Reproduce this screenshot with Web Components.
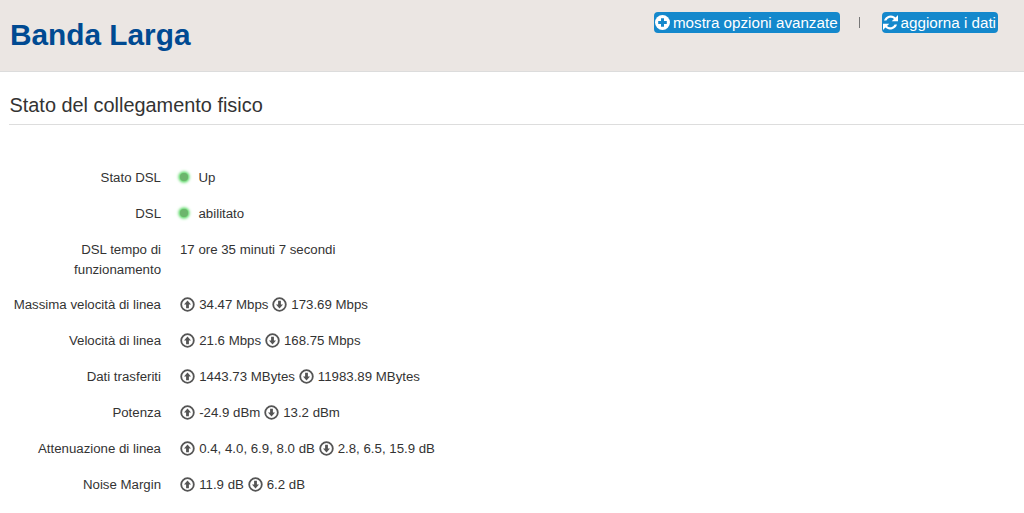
<!DOCTYPE html>
<html lang="it">
<head>
<meta charset="utf-8">
<title>Banda Larga</title>
<style>
  html, body { margin: 0; background: #fff; }
  body { font: 13px/20px "Liberation Sans", Arial, sans-serif; color: #333; }
</style>
</head>
<body>
<page-header heading="Banda Larga">
  <action-button icon="plus">mostra opzioni avanzate</action-button>
  <action-button icon="refresh">aggiorna i dati</action-button>
</page-header>

<section-block heading="Stato del collegamento fisico">
  <info-row label="Stato DSL"><status-led></status-led>Up</info-row>
  <info-row label="DSL"><status-led></status-led>abilitato</info-row>
  <info-row label="DSL tempo di funzionamento" style="margin-bottom: -1px">17 ore 35 minuti 7 secondi</info-row>
  <info-row label="Massima velocità di linea"><dir-icon dir="up"></dir-icon> 34.47 Mbps <dir-icon dir="down"></dir-icon> 173.69 Mbps</info-row>
  <info-row label="Velocità di linea"><dir-icon dir="up"></dir-icon> 21.6 Mbps <dir-icon dir="down"></dir-icon> 168.75 Mbps</info-row>
  <info-row label="Dati trasferiti"><dir-icon dir="up"></dir-icon> 1443.73 MBytes <dir-icon dir="down"></dir-icon> 11983.89 MBytes</info-row>
  <info-row label="Potenza"><dir-icon dir="up"></dir-icon> -24.9 dBm <dir-icon dir="down"></dir-icon> 13.2 dBm</info-row>
  <info-row label="Attenuazione di linea"><dir-icon dir="up"></dir-icon> 0.4, 4.0, 6.9, 8.0 dB <dir-icon dir="down"></dir-icon> 2.8, 6.5, 15.9 dB</info-row>
  <info-row label="Noise Margin"><dir-icon dir="up"></dir-icon> 11.9 dB <dir-icon dir="down"></dir-icon> 6.2 dB</info-row>
</section-block>

<script>
const templatePageHeader = /* HTML */ `
  <style>
    :host {
      display: flex;
      justify-content: space-between;
      align-items: flex-start;
      box-sizing: border-box;
      height: 72px;
      padding: 12px 26px 0 10px;
      background: #ebe6e3;
      border-bottom: 1px solid #dcdcdc;
    }

    h1 {
      margin: 5px 0 0;
      font-size: 29.8px;
      line-height: 36px;
      font-weight: bold;
      color: #004a92;
    }

    nav {
      display: flex;
      align-items: center;
    }

    ::slotted(action-button:first-child) {
      margin-right: 42px;
    }
  </style>
  <h1 id="heading"></h1>
  <nav><slot></slot></nav>
`;

class PageHeader extends HTMLElement {
  constructor() {
    super();
    this.attachShadow({ mode: "open" });
    this.shadowRoot.innerHTML = templatePageHeader;
    this.shadowRoot.getElementById("heading").textContent = this.getAttribute("heading");
  }
}

const actionIcons = {
  plus: `<circle cx="7.5" cy="7.5" r="7.5" fill="#fff"/><path d="M6 3.2h3v2.8h2.8v3H9v2.8H6V9H3.2V6H6z" fill="#1488cc"/>`,
  refresh: `<path d="M12.6 2.4A7 7 0 0 0 1 5.6h2.4a4.7 4.7 0 0 1 7.6-1.6L8.7 6.3H15V0zM2.4 12.6A7 7 0 0 0 14 9.4h-2.4A4.7 4.7 0 0 1 4 11l2.3-2.3H0V15z" fill="#fff"/>`,
};

const templateActionButton = /* HTML */ `
  <style>
    :host {
      display: inline-block;
      position: relative;
    }

    a {
      display: flex;
      align-items: center;
      gap: 3px;
      box-sizing: border-box;
      height: 21px;
      padding: 0 2px 0 1px;
      background: #1488cc;
      border-radius: 4px;
      color: #fff;
      font-size: 15.2px;
      line-height: 21px;
      white-space: nowrap;
    }

    svg {
      width: 15px;
      height: 15px;
      flex: none;
    }

    /* small divider between the two buttons */
    :host([icon="plus"])::after {
      content: "";
      position: absolute;
      left: 205px;
      top: 5px;
      width: 1.5px;
      height: 11px;
      background: #777;
    }
  </style>
  <a><svg viewBox="0 0 15 15"></svg><slot></slot></a>
`;

class ActionButton extends HTMLElement {
  constructor() {
    super();
    this.attachShadow({ mode: "open" });
    this.shadowRoot.innerHTML = templateActionButton;
    this.shadowRoot.querySelector("svg").innerHTML = actionIcons[this.getAttribute("icon")];
  }
}

const templateSectionBlock = /* HTML */ `
  <style>
    :host {
      display: block;
      padding: 0 0 0 9px;
    }

    h2 {
      margin: 0 0 35px;
      padding: 21px 0 7px 0.5px;
      font-size: 19.9px;
      line-height: 24px;
      font-weight: normal;
      color: #333;
      border-bottom: 1px solid #ddd;
    }
  </style>
  <h2 id="heading"></h2>
  <slot></slot>
`;

class SectionBlock extends HTMLElement {
  constructor() {
    super();
    this.attachShadow({ mode: "open" });
    this.shadowRoot.innerHTML = templateSectionBlock;
    this.shadowRoot.getElementById("heading").textContent = this.getAttribute("heading");
  }
}

const templateInfoRow = /* HTML */ `
  <style>
    :host {
      display: grid;
      grid-template-columns: 152px 1fr;
      column-gap: 19px;
      padding: 8px 0;
      font-size: 13.25px;
      line-height: 20px;
    }

    .label {
      text-align: right;
    }
  </style>
  <div class="label" id="label"></div>
  <div><slot></slot></div>
`;

class InfoRow extends HTMLElement {
  constructor() {
    super();
    this.attachShadow({ mode: "open" });
    this.shadowRoot.innerHTML = templateInfoRow;
    this.shadowRoot.getElementById("label").textContent = this.getAttribute("label");
  }
}

const templateStatusLed = /* HTML */ `
  <style>
    :host {
      display: inline-block;
      width: 8px;
      height: 8px;
      margin: 0 10.5px 2px 0;
      vertical-align: middle;
      position: relative;
      top: -1px;
      border-radius: 50%;
      background: #6db56d;
      box-shadow: 0 0 3px 1.5px #52d65e;
    }
  </style>
`;

class StatusLed extends HTMLElement {
  constructor() {
    super();
    this.attachShadow({ mode: "open" });
    this.shadowRoot.innerHTML = templateStatusLed;
  }
}

const templateDirIcon = /* HTML */ `
  <style>
    :host {
      display: inline-block;
      width: 15px;
      height: 15px;
      margin-right: 0.5px;
      vertical-align: -3px;
    }

    svg {
      display: block;
      width: 15px;
      height: 15px;
    }

    :host([dir="down"]) svg {
      transform: rotate(180deg);
    }
  </style>
  <svg viewBox="0 0 15 15">
    <circle cx="7.5" cy="7.5" r="6.3" fill="none" stroke="#555" stroke-width="1.8"/>
    <path d="M7.5 3.4 11 7.4H8.9V11.2H6.1V7.4H4z" fill="#555"/>
  </svg>
`;

class DirIcon extends HTMLElement {
  constructor() {
    super();
    this.attachShadow({ mode: "open" });
    this.shadowRoot.innerHTML = templateDirIcon;
  }
}

customElements.define("page-header", PageHeader);
customElements.define("action-button", ActionButton);
customElements.define("section-block", SectionBlock);
customElements.define("info-row", InfoRow);
customElements.define("status-led", StatusLed);
customElements.define("dir-icon", DirIcon);
</script>
</body>
</html>
